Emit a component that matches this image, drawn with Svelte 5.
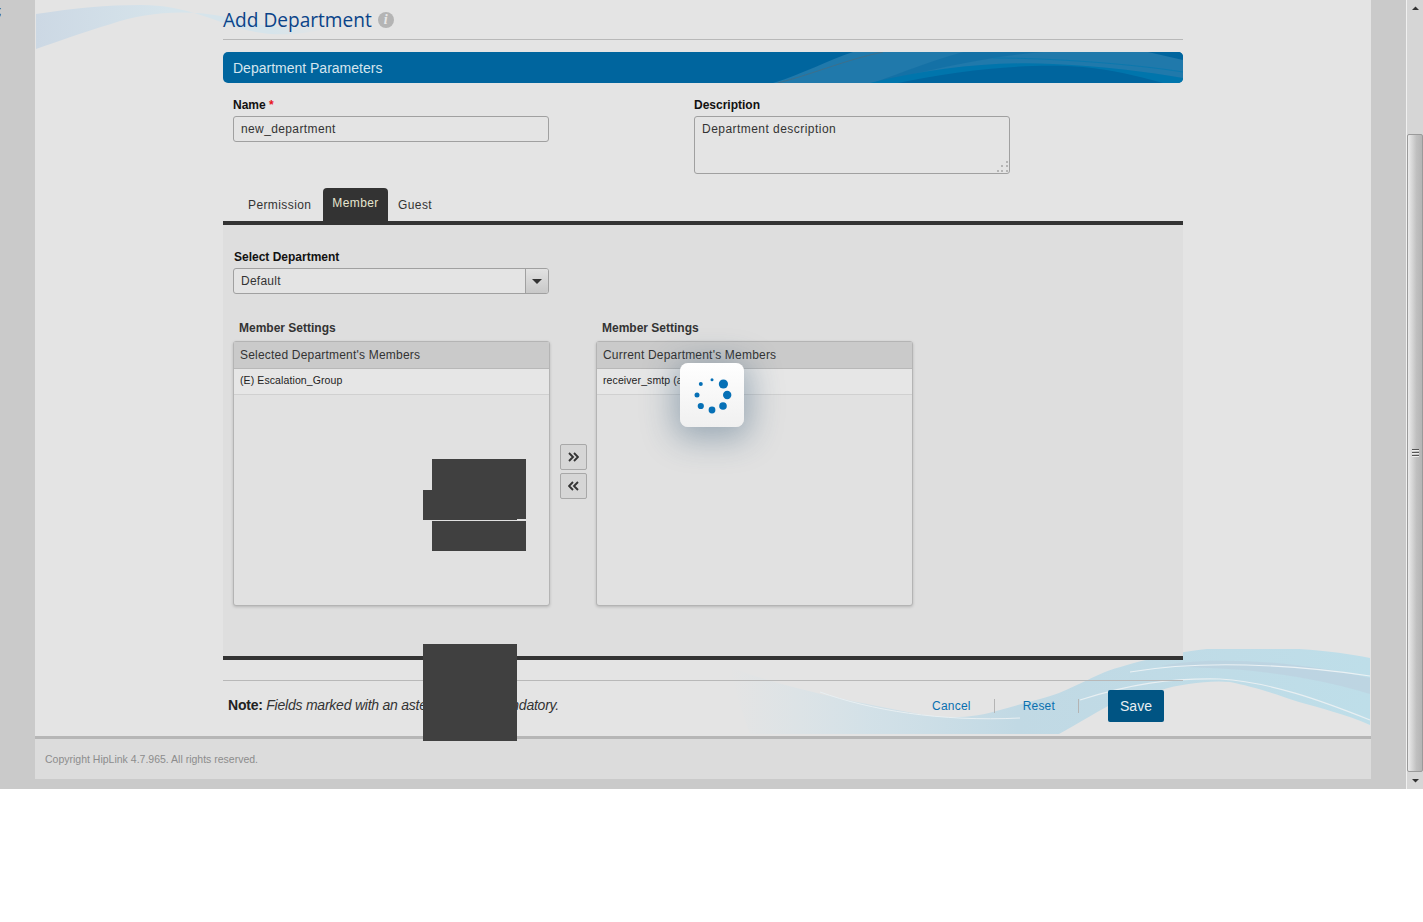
<script>
  // Add Department form, captured while the spinner overlay is up
  const lists = [
    { title: "Selected Department's Members", item: '(E) Escalation_Group' },
    { title: "Current Department's Members", item: 'receiver_smtp (admin)' }
  ];
  const dots = [
    [723.4, 384, 4.6], [727.2, 395, 4.2], [723, 406, 3.8], [712, 410, 3.4],
    [700.8, 406, 3.1], [697, 395, 2.5], [700.8, 384, 2], [712, 379.8, 1.5]
  ];
  const blocks = [
    { cls: 'b1' }, { cls: 'b2' }, { cls: 'b3' }, { cls: 'b4' }
  ];
</script>

<div class="page">
  <div class="gutter"><span class="stray">;</span></div>

  <div class="main">
    <svg class="wave-top" width="300" height="60" viewBox="0 0 300 60" aria-hidden="true">
      <defs>
        <linearGradient id="topfade" x1="0" x2="1" y1="0" y2="0">
          <stop offset="0" stop-color="#ccd8e4"/>
          <stop offset=".45" stop-color="#d6e4eb"/>
          <stop offset=".8" stop-color="#d6e4eb"/>
          <stop offset="1" stop-color="#d6e4eb" stop-opacity="0"/>
        </linearGradient>
      </defs>
      <path d="M0 14 C40 8 70 5 105 5 C150 5 180 22 210 30 C235 36 260 36 295 28 C250 30 225 26 190 17 C150 9 110 12 75 24 C45 33 20 42 0 49Z" fill="url(#topfade)"/>
    </svg>
    <svg class="wave-bottom" width="641" height="88" viewBox="0 0 641 88" aria-hidden="true">
      <defs>
        <linearGradient id="botfade" x1="0" x2="1" y1="0" y2="0">
          <stop offset="0" stop-color="#d4e3ea" stop-opacity="0"/>
          <stop offset=".22" stop-color="#cfe0e8" stop-opacity=".85"/>
          <stop offset=".45" stop-color="#c1d9e4"/>
          <stop offset="1" stop-color="#bedee9"/>
        </linearGradient>
      </defs>
      <path d="M0 19 C40 35 100 50 200 68 C230 71 250 68 270 62 C295 55 315 50 329 45 C350 36 365 28 375 24 C400 15 440 5 477 1 L569 1 C600 3 620 6 640 10 L640 77 C615 66 590 60 569 54 C540 44 520 38 500 34 C480 32 450 36 431 42 C410 48 395 50 385 54 C360 68 340 80 329 86 L20 86 C10 60 5 40 0 19Z" fill="url(#botfade)"/>
      <path d="M431 18 C480 8 560 12 640 30 L640 46 C590 30 530 22 480 20 C460 19 445 18 431 18Z" fill="#bccfde" opacity=".6"/>
      <path d="M400 24 C470 12 560 16 640 28" fill="none" stroke="#eaf1f4" stroke-width="1.2"/>
      <path d="M350 52 C400 36 440 30 490 31 C540 34 590 52 640 72" fill="none" stroke="#e8eff2" stroke-width="1.2"/>
      <path d="M90 44 C140 62 210 74 290 70" fill="none" stroke="#e8eff2" stroke-width="1"/>
    </svg>

    <div class="content">
      <div class="inner">
        <h1 class="title">
          Add Department
          <span class="info">i</span>
        </h1>

        <div class="bar">
          <svg class="bar-wave" width="420" height="31" viewBox="0 0 420 31" aria-hidden="true">
            <path d="M10 31 C40 22 65 8 90 0 L420 0 L420 31Z" fill="#2079ab"/>
            <path d="M110 31 C140 20 170 8 200 0 L280 0 C220 5 170 18 110 31Z" fill="#00659e" opacity=".35"/>
            <path d="M107 31 C170 16 230 9 290 12 C340 14 385 20 420 26 L420 31Z" fill="#0075ac"/>
            <path d="M135 31 C200 17 270 11 320 15 C350 18 375 24 400 31Z" fill="#00659e"/>
            <path d="M15 31 C50 22 85 7 120 0" fill="none" stroke="#3d6f8b" stroke-width="1"/>
            <path d="M230 6 C290 6 370 12 420 20" fill="none" stroke="#0c78ad" stroke-width="1"/>
            <path d="M385 0 L420 0 L420 8Z" fill="#00659e"/>
          </svg>
          <span>Department Parameters</span>
        </div>

        <div class="fields">
          <div class="field name">
            <div class="label">Name <em>*</em></div>
            <div class="input">new_department</div>
          </div>
          <div class="field desc">
            <div class="label">Description</div>
            <div class="input area">
              Department description
              <svg class="grip" width="13" height="13" viewBox="0 0 13 13" aria-hidden="true">
                <g fill="#b5b5b5">
                  <rect x="10" y="1" width="2" height="2"/>
                  <rect x="5" y="5" width="2" height="2"/><rect x="10" y="5" width="2" height="2"/>
                  <rect x="1" y="10" width="2" height="2"/><rect x="5" y="10" width="2" height="2"/><rect x="10" y="10" width="2" height="2"/>
                </g>
              </svg>
            </div>
          </div>
        </div>

        <div class="tabs">
          <div class="tab">Permission</div>
          <div class="tab active">Member</div>
          <div class="tab">Guest</div>
        </div>

        <div class="panel">
          <div class="label dept">Select Department</div>
          <div class="select">
            <span>Default</span>
            <span class="caret"><i></i></span>
          </div>

          <div class="transfer">
            {#each lists as list, i}
              <div class="col">
                <div class="col-label">Member Settings</div>
                <div class="list">
                  <div class="list-head">{list.title}</div>
                  <div class="list-row">{list.item}</div>
                </div>
              </div>
              {#if i === 0}
                <div class="moves">
                  <button class="move" aria-label="Add">
                    <svg width="11" height="10" viewBox="0 0 11 10"><path d="M1 1l4 4-4 4M6 1l4 4-4 4" fill="none" stroke="#333" stroke-width="1.9"/></svg>
                  </button>
                  <button class="move" aria-label="Remove">
                    <svg width="11" height="10" viewBox="0 0 11 10"><path d="M5 1L1 5l4 4M10 1L6 5l4 4" fill="none" stroke="#333" stroke-width="1.9"/></svg>
                  </button>
                </div>
              {/if}
            {/each}
          </div>
        </div>

        <div class="actions">
          <p class="note"><b>Note:</b> <i>Fields marked with an asterisk (*) are mandatory.</i></p>
          <a class="link" href="#cancel">Cancel</a>
          <span class="sep"></span>
          <a class="link reset" href="#reset">Reset</a>
          <span class="sep"></span>
          <button class="save">Save</button>
        </div>
      </div>
    </div>

    <div class="footer">Copyright HipLink 4.7.965. All rights reserved.</div>
  </div>

  <div class="side"></div>

  <div class="scrollbar">
    <svg class="arrow" width="17" height="17" viewBox="0 0 17 17"><path d="M5 10h7L8.500 6.500z" fill="#333"/></svg>
    <div class="track-space"></div>
    <div class="thumb">
      <div class="thumb-grip"><i></i><i></i><i></i></div>
    </div>
    <svg class="arrow" width="17" height="17" viewBox="0 0 17 17"><path d="M5 7h7l-3.500 3.500z" fill="#333"/></svg>
  </div>

  {#each blocks as b}
    <div class="block {b.cls}"></div>
  {/each}

  <div class="spinner">
    <svg width="64" height="64" viewBox="680 363 64 64" aria-hidden="true">
      {#each dots as d}
        <circle cx={d[0]} cy={d[1]} r={d[2]} fill="#0670b6"/>
      {/each}
    </svg>
  </div>
</div>

<style>
  :global(body) {
    margin: 0;
    background: #fff;
  }

  .page {
    position: relative;
    display: flex;
    width: 1423px;
    height: 789px;
    overflow: hidden;
    background: #cacaca;
    font-family: "Liberation Sans", Arial, sans-serif;
    font-size: 12px;
    color: #333;
  }

  .gutter {
    width: 35px;
    flex: none;
    overflow: hidden;
  }

  .stray {
    display: block;
    margin-left: -2px;
    font-size: 13px;
    line-height: 21px;
    color: #222;
  }

  .main {
    position: relative;
    width: 1336px;
    flex: none;
    height: 779px;
    display: flex;
    flex-direction: column;
    background: #e4e4e4;
  }

  .wave-top {
    position: absolute;
    left: 1px;
    top: 0;
  }

  .wave-bottom {
    position: absolute;
    left: 695px;
    top: 648px;
  }

  .content {
    position: relative;
    height: 736px;
    flex: none;
    padding-left: 188px;
    box-sizing: border-box;
  }

  .inner {
    width: 960px;
  }

  .title {
    display: flex;
    align-items: center;
    gap: 6px;
    height: 39px;
    margin: 0;
    border-bottom: 1px solid #b8b8b8;
    font-family: "Open Sans", "Noto Sans", sans-serif;
    font-size: 19.1px;
    font-weight: 400;
    color: #0a4389;
  }

  .info {
    display: inline-flex;
    align-items: center;
    justify-content: center;
    width: 16px;
    height: 16px;
    border-radius: 50%;
    background: #b4b4b4;
    color: #e8e8e8;
    font-family: "Liberation Serif", serif;
    font-size: 14px;
    font-style: italic;
    font-weight: 700;
  }

  .bar {
    position: relative;
    display: flex;
    align-items: center;
    height: 31px;
    margin-top: 12px;
    padding-left: 10px;
    overflow: hidden;
    border-radius: 5px;
    background: #00659e;
    font-size: 14px;
    color: #d6e6ef;
  }

  .bar-wave {
    position: absolute;
    right: 0;
    top: 0;
  }

  .bar span {
    position: relative;
  }

  .fields {
    display: flex;
    height: 105px;
    padding: 15px 0 0 10px;
    box-sizing: border-box;
  }

  .field.name {
    width: 461px;
  }

  .label {
    height: 18px;
    font-size: 12px;
    font-weight: 700;
    line-height: 14px;
    color: #111;
  }

  .label em {
    font-style: normal;
    color: #e8121e;
  }

  .input {
    box-sizing: border-box;
    width: 316px;
    height: 26px;
    padding: 0 7px;
    border: 1px solid #a0a0a0;
    border-radius: 3px;
    line-height: 24px;
    font-size: 12px;
    letter-spacing: .38px;
    color: #333;
  }

  .input.area {
    position: relative;
    height: 58px;
    letter-spacing: .46px;
  }

  .grip {
    position: absolute;
    right: 0;
    bottom: 0;
  }

  .tabs {
    display: flex;
    height: 33px;
    padding-left: 25px;
  }

  .tab {
    padding: 0;
    line-height: 34px;
    letter-spacing: .4px;
    font-size: 12px;
    color: #333;
    height: 33px;
  }

  .tab:first-child {
    width: 75px;
  }

  .tab.active {
    box-sizing: border-box;
    width: 65px;
    margin-right: 10px;
    padding: 0;
    text-align: center;
    line-height: 30px;
    border-radius: 4px 4px 0 0;
    background: #333;
    color: #e6e6cf;
  }

  .panel {
    box-sizing: border-box;
    height: 439px;
    padding: 25px 0 0 10px;
    border-top: 4px solid #333;
    border-bottom: 4px solid #333;
    background: #dedede;
  }

  .label.dept {
    padding-left: 1px;
  }

  .select {
    display: flex;
    justify-content: space-between;
    box-sizing: border-box;
    width: 316px;
    height: 26px;
    padding-left: 7px;
    overflow: hidden;
    border: 1px solid #a0a0a0;
    border-radius: 3px;
    background: #e4e4e4;
    line-height: 25px;
    letter-spacing: .25px;
  }

  .caret {
    display: flex;
    align-items: center;
    justify-content: center;
    width: 22px;
    border-left: 1px solid #a0a0a0;
    background: linear-gradient(#e2e2e2, #c8c8c8);
  }

  .caret i {
    width: 0;
    height: 0;
    border: 5px solid transparent;
    border-top-color: #333;
    border-bottom-width: 0;
  }

  .transfer {
    display: flex;
    margin-top: 27px;
  }

  .col-label {
    height: 20px;
    padding-left: 6px;
    font-weight: 700;
    line-height: 14px;
    color: #333;
  }

  .list {
    box-sizing: border-box;
    width: 317px;
    height: 265px;
    border: 1px solid #b4b4b4;
    border-radius: 3px;
    box-shadow: 0 1px 3px rgba(0, 0, 0, .18);
    background: #e1e1e1;
  }

  .list-head {
    height: 26px;
    padding-left: 6px;
    border-bottom: 1px solid #b8b8b8;
    background: #cacaca;
    line-height: 26px;
    letter-spacing: .2px;
    color: #333;
  }

  .list-row {
    height: 25px;
    padding-left: 6px;
    border-bottom: 1px solid #d0d0d0;
    background: #e6e6e6;
    font-size: 10.5px;
    line-height: 22px;
    letter-spacing: .1px;
    color: #222;
  }

  .moves {
    display: flex;
    flex-direction: column;
    gap: 3px;
    width: 46px;
    padding: 123px 0 0 10px;
    box-sizing: border-box;
  }

  .move {
    display: flex;
    align-items: center;
    justify-content: center;
    box-sizing: border-box;
    width: 27px;
    height: 26px;
    padding: 0;
    border: 1px solid #a8a8a8;
    border-radius: 2px;
    background: #d6d6d6;
  }

  .actions {
    position: relative;
    display: flex;
    align-items: center;
    height: 50px;
    margin-top: 20px;
    padding: 0 19px 0 5px;
    border-top: 1px solid #b8b8b8;
    box-sizing: border-box;
  }

  .note {
    flex: 1;
    margin: 0 0 1px;
    font-size: 14px;
    color: #333;
    letter-spacing: -.23px;
  }

  .note b {
    color: #222;
  }

  .link {
    font-size: 12px;
    color: #0a70b0;
    letter-spacing: .2px;
    text-decoration: none;
    padding-top: 1px;
  }

  .sep {
    width: 1px;
    height: 14px;
    margin: 1px 0 0 23px;
    background: #b4b4b4;
  }

  .reset {
    margin-left: 28px;
  }

  .sep:last-of-type {
    margin-right: 29px;
  }

  .save {
    width: 56px;
    height: 32px;
    padding: 0;
    border: 0;
    border-radius: 2px;
    background: #005483;
    color: #e8eef2;
    font-family: inherit;
    font-size: 14px;
  }

  .footer {
    flex: 1;
    padding: 14px 0 0 10px;
    border-top: 3px solid #b6b6b6;
    background: #dcdcdc;
    font-size: 10.5px;
    line-height: 13px;
    color: #8c8c8c;
  }

  .side {
    width: 35px;
    flex: none;
  }

  .scrollbar {
    display: flex;
    flex-direction: column;
    width: 17px;
    flex: none;
    border-left: 1px solid #f0f0f0;
    box-sizing: border-box;
    background: #d6d6d6;
  }

  .arrow {
    flex: none;
  }

  .track-space {
    height: 117px;
    flex: none;
  }

  .thumb {
    display: flex;
    align-items: center;
    justify-content: center;
    flex: 1;
    border: 1px solid #9a9a9a;
    border-radius: 2px;
    background: linear-gradient(90deg, #ececec, #c0c0c0 60%, #b4b4b4);
  }

  .thumb-grip {
    display: flex;
    flex-direction: column;
    gap: 1px;
  }

  .thumb-grip i {
    display: block;
    width: 7px;
    height: 1px;
    background: #555;
    border-bottom: 1px solid #eee;
  }

  .block {
    position: absolute;
    width: 94px;
    background: #404040;
  }

  .b1 { left: 432px; top: 459px; height: 60px; }
  .b2 { left: 423px; top: 490px; height: 30px; }
  .b3 { left: 432px; top: 521px; height: 30px; }
  .b4 { left: 423px; top: 644px; height: 97px; }

  .spinner {
    position: absolute;
    left: 680px;
    top: 363px;
    width: 64px;
    height: 64px;
    border-radius: 8px;
    background: linear-gradient(#fff, #f0f0f0);
    box-shadow: 0 6px 32px 6px rgba(40, 80, 110, .38);
  }

  .spinner svg {
    display: block;
  }
</style>
